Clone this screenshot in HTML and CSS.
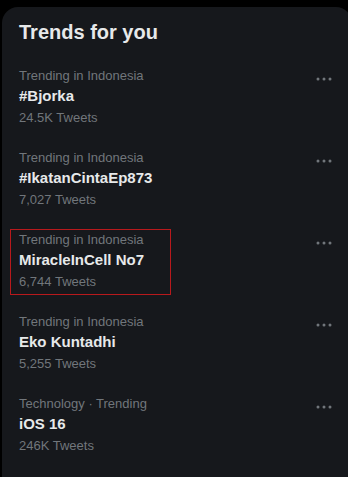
FILE: index.html
```html
<!DOCTYPE html>
<html>
<head>
<meta charset="utf-8">
<link rel="stylesheet" href="styles.css">
</head>
<body>
<section class="card">
  <h2 class="title">Trends for you</h2>
  <div class="trend">
    <div class="info">
      <div class="meta">Trending in Indonesia</div>
      <div class="name">#Bjorka</div>
      <div class="count">24.5K Tweets</div>
    </div>
    <svg class="more" viewBox="0 0 18 22" width="18" height="22"><circle cx="3" cy="11" r="1.5"/><circle cx="9" cy="11" r="1.5"/><circle cx="15" cy="11" r="1.5"/></svg>
  </div>
  <div class="trend">
    <div class="info">
      <div class="meta">Trending in Indonesia</div>
      <div class="name">#IkatanCintaEp873</div>
      <div class="count">7,027 Tweets</div>
    </div>
    <svg class="more" viewBox="0 0 18 22" width="18" height="22"><circle cx="3" cy="11" r="1.5"/><circle cx="9" cy="11" r="1.5"/><circle cx="15" cy="11" r="1.5"/></svg>
  </div>
  <div class="trend">
    <div class="info">
      <div class="meta">Trending in Indonesia</div>
      <div class="name">MiracleInCell No7</div>
      <div class="count">6,744 Tweets</div>
    </div>
    <svg class="more" viewBox="0 0 18 22" width="18" height="22"><circle cx="3" cy="11" r="1.5"/><circle cx="9" cy="11" r="1.5"/><circle cx="15" cy="11" r="1.5"/></svg>
    <div class="highlight"></div>
  </div>
  <div class="trend">
    <div class="info">
      <div class="meta">Trending in Indonesia</div>
      <div class="name">Eko Kuntadhi</div>
      <div class="count">5,255 Tweets</div>
    </div>
    <svg class="more" viewBox="0 0 18 22" width="18" height="22"><circle cx="3" cy="11" r="1.5"/><circle cx="9" cy="11" r="1.5"/><circle cx="15" cy="11" r="1.5"/></svg>
  </div>
  <div class="trend">
    <div class="info">
      <div class="meta">Technology · Trending</div>
      <div class="name">iOS 16</div>
      <div class="count">246K Tweets</div>
    </div>
    <svg class="more" viewBox="0 0 18 22" width="18" height="22"><circle cx="3" cy="11" r="1.5"/><circle cx="9" cy="11" r="1.5"/><circle cx="15" cy="11" r="1.5"/></svg>
  </div>
</section>
</body>
</html>
```
FILE: styles.css
```css
html, body {
  margin: 0;
  padding: 0;
  background: #000;
  overflow: hidden;
  height: 100%;
  font-family: "Liberation Sans", Arial, sans-serif;
}
body {
  display: flex;
  flex-direction: column;
  padding: 7px 0 0 2px;
  box-sizing: border-box;
}
.card {
  flex: 1;
  margin-right: -4px;
  background: #16181c;
  border-radius: 16px 16px 0 0;
}
.title {
  margin: 0;
  padding: 13px 17px 12px 17px;
  font-size: 20px;
  line-height: 24px;
  font-weight: 700;
  color: #e7e9ea;
}
.trend {
  position: relative;
  display: flex;
  align-items: flex-start;
  justify-content: space-between;
  padding: 12px 19px 12px 17px;
}
.info {
  display: flex;
  flex-direction: column;
}
.meta, .count {
  font-size: 13px;
  line-height: 16px;
  color: #71767b;
}
.name {
  margin-top: 2px;
  font-size: 15px;
  line-height: 20px;
  font-weight: 700;
  color: #e7e9ea;
}
.count {
  margin-top: 4px;
}
.more {
  fill: #71767b;
}
.highlight {
  position: absolute;
  left: 8px;
  top: 9px;
  width: 161px;
  height: 66px;
  border: 1px solid #b8191c;
  box-sizing: border-box;
}
```
